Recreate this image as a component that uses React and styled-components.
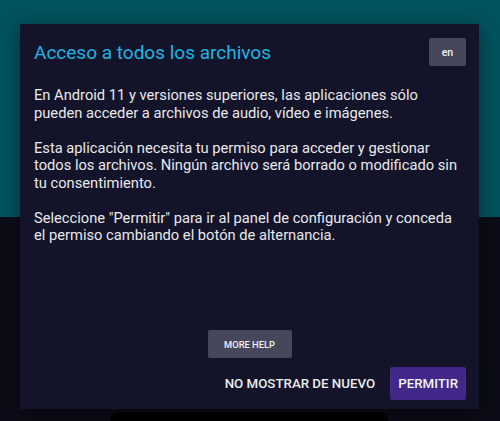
import styled, { createGlobalStyle } from 'styled-components';

const GlobalStyle = createGlobalStyle`
    html, body {
        margin: 0;
        padding: 0;
        background: #0c0c18;
    }
    body {
        font-family: Roboto, "Noto Sans", "Liberation Sans", sans-serif;
        -webkit-font-smoothing: antialiased;
    }
`

const Screen = styled.div`
    position: relative;
    width: 500px;
    height: 421px;
    overflow: hidden;
    display: flex;
    flex-direction: column;
`

const TopBand = styled.div`
    height: 217px;
    background: #00535f;
`

const BottomBand = styled.div`
    flex: 1;
    display: flex;
    align-items: flex-end;
    justify-content: center;
    background: #0c0c18;
`

// the bottom sheet peeking out from under the dialog
const Sheet = styled.div`
    width: 278px;
    height: 9px;
    margin-left: -2px;
    background: #000;
    border-radius: 10px 10px 0 0;
`

const Backdrop = styled.div`
    position: absolute;
    inset: 0;
    padding: 24px 21px 12px 20px;
    display: flex;
`

const Dialog = styled.div`
    flex: 1;
    display: flex;
    flex-direction: column;
    background: #13142a;
    box-shadow: 0 4px 18px rgba(0, 0, 0, 0.45);
    padding: 14px 13px 9px 14px;
`

const TitleRow = styled.div`
    display: flex;
    justify-content: space-between;
    align-items: flex-start;
`

const Title = styled.h2`
    margin: 3px 0 0 0;
    font-size: 19px;
    font-weight: 400;
    line-height: 24px;
    color: #1fb4e2;
`

const Button = styled.button`
    border: none;
    border-radius: 2px;
    font-family: Roboto, "Noto Sans", "Liberation Sans", sans-serif;
    font-weight: 500;
    text-transform: uppercase;
    cursor: pointer;
    color: ${(props) => (props.$flat ? '#ececec' : '#f2f2f2')};
    background: ${(props) => {
        if (props.$flat) return 'transparent';
        if (props.$primary) return '#43288a';
        return '#46475b';
    }};
`

const LangButton = styled(Button)`
    width: 37px;
    height: 28px;
    padding: 0;
    font-size: 10.5px;
    text-transform: none;
`

const Body = styled.div`
    margin-top: 21px;
    color: #e9e9ec;
    font-size: 14.7px;
    line-height: 17.5px;
    > p {
        margin: 0 0 17.5px 0;
    }
`

const Spacer = styled.div`
    flex: 1;
`

const HelpRow = styled.div`
    display: flex;
    justify-content: center;
    padding-right: 1px;
    margin-bottom: 9px;
`

const HelpButton = styled(Button)`
    width: 84px;
    height: 28px;
    padding: 0;
    font-size: 9.3px;
`

const Actions = styled.div`
    display: flex;
    justify-content: flex-end;
    align-items: center;
    gap: 7px;
`

const ActionButton = styled(Button)`
    height: 33px;
    padding: 0 8px;
    font-size: 13.3px;
`

export default function App() {
    return (
        <>
            <GlobalStyle />
            <Screen>
                <TopBand />
                <BottomBand>
                    <Sheet />
                </BottomBand>
                <Backdrop>
                    <Dialog>
                        <TitleRow>
                            <Title>Acceso a todos los archivos</Title>
                            <LangButton>en</LangButton>
                        </TitleRow>
                        <Body>
                            <p>En Android 11 y versiones superiores, las aplicaciones sólo pueden acceder a archivos de audio, vídeo e imágenes.</p>
                            <p>Esta aplicación necesita tu permiso para acceder y gestionar todos los archivos. Ningún archivo será borrado o modificado sin tu consentimiento.</p>
                            <p>Seleccione "Permitir" para ir al panel de configuración y conceda el permiso cambiando el botón de alternancia.</p>
                        </Body>
                        <Spacer />
                        <HelpRow>
                            <HelpButton>More help</HelpButton>
                        </HelpRow>
                        <Actions>
                            <ActionButton $flat>No mostrar de nuevo</ActionButton>
                            <ActionButton $primary>Permitir</ActionButton>
                        </Actions>
                    </Dialog>
                </Backdrop>
            </Screen>
        </>
    );
}
